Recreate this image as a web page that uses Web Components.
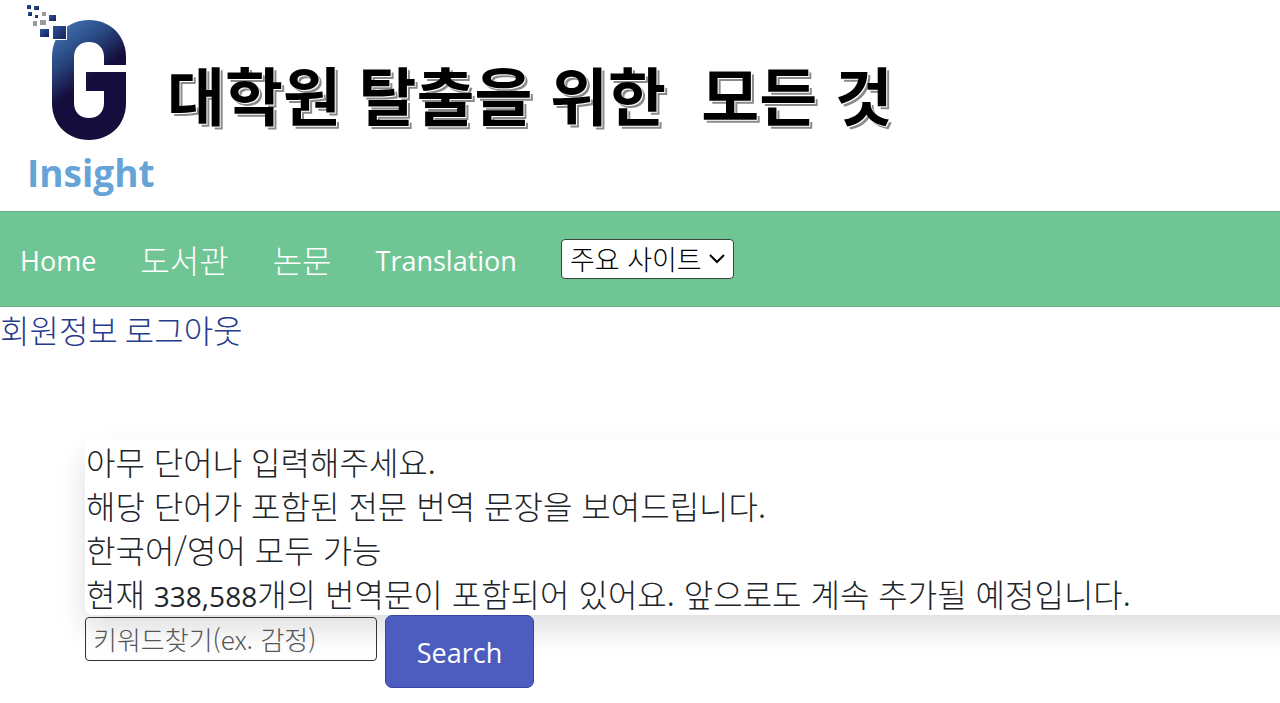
<!DOCTYPE html>
<html lang="ko">
<head>
<meta charset="utf-8">
<meta name="viewport" content="width=device-width, initial-scale=1">
<title>G Insight</title>
<style>
  body { margin: 0; background: #fff; color: #212529; overflow-x: hidden;
    font-family: "Noto Sans CJK KR", sans-serif; font-size: 32px; font-weight: 300; line-height: 44px;
    --latin: "Open Sans", "Noto Sans CJK KR", sans-serif; }
</style>
</head>
<body>
<site-header>대학원 탈출을 위한&nbsp; 모든 것</site-header>
<site-nav>
  <nav-link href="#home" latin>Home</nav-link>
  <nav-link href="#library">도서관</nav-link>
  <nav-link href="#papers">논문</nav-link>
  <nav-link href="#translation" latin>Translation</nav-link>
  <site-picker></site-picker>
</site-nav>
<account-links></account-links>
<main>
  <search-panel>
    <info-card>
      <p>아무 단어나 입력해주세요.</p>
      <p>해당 단어가 포함된 전문 번역 문장을 보여드립니다.</p>
      <p>한국어/영어 모두 가능</p>
      <p>현재 <num-text>338,588</num-text>개의 번역문이 포함되어 있어요. 앞으로도 계속 추가될 예정입니다.</p>
    </info-card>
  </search-panel>
</main>
<script>
const define = (name, html, setup) => customElements.define(name, class extends HTMLElement {
  constructor() {
    super();
    const t = document.createElement('template');
    t.innerHTML = html;
    this.attachShadow({ mode: 'open' }).append(t.content.cloneNode(true));
  }
  connectedCallback() { if (setup) setup(this, this.shadowRoot); }
});

define('brand-logo', `
<style>
  :host { display: block; width: 128px; }
  a { display: block; color: #66a3d6; text-decoration: none; }
  svg { display: block; }
  span { display: block; font: 700 37px/50px "Open Sans", sans-serif; }
</style>
<a href="#home">
  <svg width="104" height="148" viewBox="27 0 104 148" aria-hidden="true">
    <defs>
      <linearGradient id="g" gradientUnits="userSpaceOnUse" x1="58" y1="30" x2="93" y2="77">
        <stop offset="0" stop-color="#3f6fae"/><stop offset=".5" stop-color="#28467f"/><stop offset="1" stop-color="#150d3c"/>
      </linearGradient>
      <linearGradient id="s" x1="0" y1="0" x2="1" y2="1">
        <stop offset="0" stop-color="#2c559a"/><stop offset="1" stop-color="#17205a"/>
      </linearGradient>
    </defs>
    <path fill="url(#g)" d="M126 65V57C126 35 110 20 89 20S52 35 52 57V103C52 125 68 140 89 140S126 125 126 103V72H86V91H104V103C104 112 98 118 89 118S74 112 74 103V57C74 48 80 42 89 42S104 48 104 57V65Z"/>
    <path fill="#fff" d="M50 24H67V40H50Z"/>
    <g fill="url(#s)">
      <rect x="53" y="26" width="13" height="13"/><rect x="40" y="29" width="9" height="8"/>
      <rect x="49" y="15" width="7" height="6"/><rect x="27" y="5" width="4" height="4"/>
      <rect x="34" y="6" width="5" height="4"/><rect x="28" y="12" width="4" height="4"/><rect x="35" y="15" width="3" height="3"/>
    </g>
    <g fill="#9a9a9c"><rect x="42" y="12" width="4" height="4"/><rect x="33" y="21" width="4" height="5"/><rect x="40" y="20" width="6" height="5"/></g>
  </svg>
  <span>Insight</span>
</a>`);

define('site-header', `
<style>
  :host { display: block; }
  header { display: flex; align-items: center; gap: 12px; box-sizing: border-box; height: 211px; padding-left: 27px; }
  brand-logo { align-self: flex-start; }
  h1 { margin: 0 0 26px; font-size: 63px; line-height: 88px; font-weight: 700; color: #000; white-space: nowrap;
    text-shadow: 1px 1px 0 #fff, 3px 3px 0 #8a8a8a; }
</style>
<header><brand-logo></brand-logo><h1><slot></slot></h1></header>`);

define('site-nav', `
<style>
  :host { display: block; }
  nav { display: flex; align-items: center; gap: 44px; box-sizing: border-box; height: 96px; padding: 0 20px;
    background: #6fc594; border-top: 1px solid #66ad86; border-bottom: 1px solid #66ad86; }
</style>
<nav><slot></slot></nav>`);

define('nav-link', `
<style>
  :host { display: block; }
  :host([latin]) { padding-top: 4px; font-family: var(--latin); font-size: 27px; font-weight: 400; }
  a { color: #fff; text-decoration: none; }
</style>
<a><slot></slot></a>`, (el, root) => { root.querySelector('a').href = el.getAttribute('href'); });

define('site-picker', `
<style>
  :host { display: block; }
  .box { display: grid; align-items: center; width: 173px; }
  select, svg { grid-area: 1 / 1; }
  select { appearance: none; box-sizing: border-box; width: 100%; height: 40px; margin: 0; padding: 0 8px;
    font: inherit; font-size: 27px; line-height: 36px; color: #000; background: #fff; border: 1px solid #38463e; border-radius: 4px; }
  svg { justify-self: end; margin-right: 8px; pointer-events: none; }
</style>
<div class="box">
  <select aria-label="주요 사이트"><option>주요 사이트</option></select>
  <svg width="18" height="12" viewBox="0 0 18 12" fill="none" stroke="#000" stroke-width="2" aria-hidden="true"><path d="M2 2L9 9L16 2"/></svg>
</div>`);

define('account-links', `
<style>
  :host { display: flex; gap: 7px; }
  a { color: #263a8c; text-decoration: none; }
</style>
<a href="#profile">회원정보</a><a href="#logout">로그아웃</a>`);

define('num-text', `
<style>:host { font-family: var(--latin); font-size: 28px; font-weight: 400; }</style><slot></slot>`);

define('info-card', `
<style>
  :host { display: block; margin-right: -64px; background: #fff; border-radius: 7px; box-shadow: 0 15px 29px rgba(0,0,0,.13); }
  ::slotted(p) { margin: 0; padding-left: 1px; height: 44px; white-space: nowrap; }
</style>
<slot></slot>`);

define('search-panel', `
<style>
  :host { display: block; padding: 88px 0 15px 85px; }
  form { position: relative; display: flex; align-items: flex-start; gap: 8px; }
  input { box-sizing: border-box; width: 292px; height: 44px; margin: 2px 0 0; padding: 0 7px; font: inherit; font-size: 26px;
    color: #212529; background: transparent; border: 1px solid #333; border-radius: 4px; }
  input::placeholder { color: #555; opacity: 1; }
  button { box-sizing: border-box; width: 149px; height: 73px; margin: 0; padding: 2px 0 0; color: #fff;
    font: 400 27px/44px var(--latin); background: #4c5dbf; border: 1px solid #3545a0; border-radius: 7px; }
</style>
<slot></slot>
<form>
  <input type="text" aria-label="키워드찾기" placeholder="키워드찾기(ex. 감정)">
  <button type="button">Search</button>
</form>`);
</script>
</body>
</html>
